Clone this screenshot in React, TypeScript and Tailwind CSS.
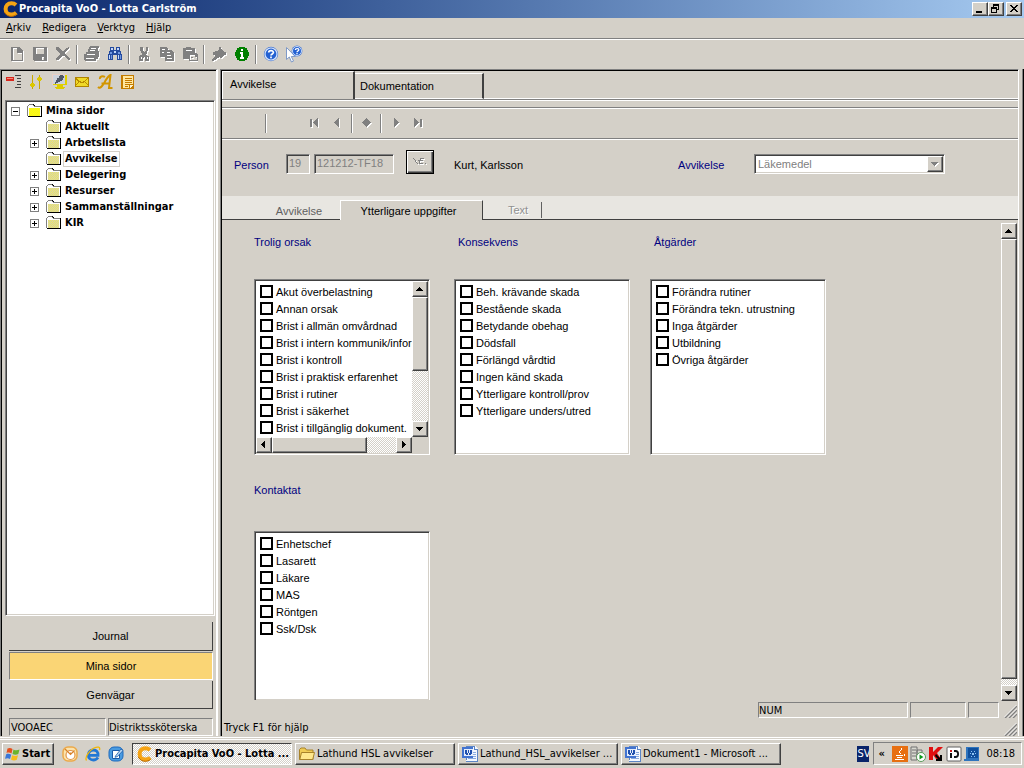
import React from "react";
import clsx from "clsx";

const raised =
  "bg-[#d4d0c8] border border-t-white border-l-white border-r-[#404040] border-b-[#404040] shadow-[inset_-1px_-1px_#808080]";
const sunken =
  "border border-t-[#808080] border-l-[#808080] border-r-white border-b-white shadow-[inset_1px_1px_#404040,inset_-1px_-1px_#d4d0c8]";
const thinSunken =
  "border border-t-[#808080] border-l-[#808080] border-r-white border-b-white";
const track =
  "bg-[repeating-conic-gradient(#ffffff_0_25%,#d4d0c8_0_50%)] bg-[length:2px_2px]";
const sans = "font-['Liberation_Sans',sans-serif]";

type IconProps = { children: React.ReactNode; size?: number };

const Icon = ({ children, size = 16 }: IconProps) => (
  <svg
    width={size}
    height={size}
    viewBox="0 0 16 16"
    shapeRendering="crispEdges"
    className="shrink-0"
    aria-hidden="true"
  >
    {children}
  </svg>
);

// Disabled glyph: grey shape with a white edge below and to the right
const Embossed = ({ d }: { d: string }) => (
  <Icon>
    <path d={d} fill="#fff" fillRule="evenodd" transform="translate(1 1)" />
    <path d={d} fill="#808080" fillRule="evenodd" />
  </Icon>
);

const Logo = () => (
  <svg width="17" height="16" viewBox="0 0 17 16" className="shrink-0" aria-hidden="true">
    <path
      d="M14 4C12.500 2.600 11 2.200 9.500 2.200C5.800 2.200 3.600 4.700 3.600 8C3.600 11.500 6.200 13.600 9.300 13.600C11.200 13.600 13 13 14.300 11.800"
      fill="none"
      stroke="#f5a314"
      strokeWidth="4"
    />
    <path
      d="M2.300 11C4 14.200 6.700 15.300 9.300 15.300C11.200 15.300 13 14.600 14.500 13.400"
      fill="none"
      stroke="#b86a05"
      strokeWidth="1"
    />
  </svg>
);

const Divider = () => (
  <span className="flex w-1.5 shrink-0 justify-center">
    <span className="h-[19px] w-0.5 border-l border-l-[#808080] bg-white" />
  </span>
);

const Groove = () => (
  <div className="shrink-0 border-t border-b border-t-[#808080] border-b-white" />
);

const ToolButton = ({ label, children }: { label: string; children: React.ReactNode }) => (
  <button
    type="button"
    aria-label={label}
    className="flex h-[22px] w-[23px] shrink-0 items-center justify-center"
  >
    {children}
  </button>
);

const arrows = {
  up: "M6 5h1v1h1v1h1v1h1v1H3V8h1V7h1V6h1z",
  down: "M3 5h7v1H9v1H8v1H7v1H6V8H5V7H4V6H3z",
  left: "M8 3v7H7V9H6V8H5V7H4V6h1V5h1V4h1V3z",
  right: "M5 3h1v1h1v1h1v1h1v1H8v1H7v1H6v1H5z",
};

const ArrowButton = ({ dir }: { dir: keyof typeof arrows }) => (
  <button
    type="button"
    aria-label={dir}
    className={clsx("flex size-4 shrink-0 items-start", raised)}
  >
    <svg width="14" height="14" viewBox="0 0 14 14" shapeRendering="crispEdges" aria-hidden="true">
      <path d={arrows[dir]} fill="#000" />
    </svg>
  </button>
);

const TitleBar = () => (
  <header className="flex h-[18px] items-center bg-linear-to-r from-[#0a246a] to-[#a6caf0] px-0.5">
    <Logo />
    <h1 className="flex-1 text-[11px] font-bold text-white">
      Procapita VoO - Lotta Carlström
    </h1>
    <button type="button" aria-label="Minimera" className={clsx("flex h-[14px] w-4", raised)}>
      <svg width="14" height="12" viewBox="0 0 14 12" shapeRendering="crispEdges">
        <path d="M3 8h6v2H3z" />
      </svg>
    </button>
    <button type="button" aria-label="Återställ" className={clsx("flex h-[14px] w-4", raised)}>
      <svg width="14" height="12" viewBox="0 0 14 12" shapeRendering="crispEdges">
        <path
          fillRule="evenodd"
          d="M4 1h6v6H8V6h1V3H5v1H4zM2 4h6v6H2zM3 6v3h4V6z"
        />
      </svg>
    </button>
    <button type="button" aria-label="Stäng" className={clsx("ml-0.5 flex h-[14px] w-4", raised)}>
      <svg width="14" height="12" viewBox="0 0 14 12" shapeRendering="crispEdges">
        <path d="M3 2h2v1h1v1h2v-1h1v-1h2v1h-1v1h-1v1h-1v1h1v1h1v1h1v1h-2v-1h-1v-1H6v1H5v1H3V8h1V7h1V6h1V5H5V4H4V3H3z" />
      </svg>
    </button>
  </header>
);

const MenuBar = () => (
  <nav className="flex h-5 items-center gap-px pl-px">
    {["Arkiv", "Redigera", "Verktyg", "Hjälp"].map((item) => (
      <button key={item} type="button" className="px-[5px]">
        <u className="underline-offset-1">{item[0]}</u>
        {item.slice(1)}
      </button>
    ))}
  </nav>
);

const HelpBall = () => (
  <>
    <circle cx="8" cy="8" r="7.200" fill="#4a78d0" />
    <circle cx="8" cy="8" r="6" fill="#2461d2" stroke="#d5e4fb" strokeWidth="1.200" />
    <path
      d="M5.700 6.500C5.700 4.200 10.500 4 10.400 6.500C10.300 8 8 8 8 9.600M8 10.600V12.300"
      fill="none"
      stroke="#fff"
      strokeWidth="1.700"
    />
  </>
);

const Toolbar = () => (
  <div className="flex h-[29px] items-center pb-px pl-[5px]">
    <ToolButton label="Ny">
      <Embossed d="M2 1h9v1h1v1h1v1h1v11H2zM4 2v12h9V7H8V2z" />
    </ToolButton>
    <ToolButton label="Spara">
      <Embossed d="M1 1h14v14H2v-1H1zM4 2v6h8V2zM10 11v3h2v-3z" />
    </ToolButton>
    <ToolButton label="Ta bort">
      <Embossed d="M1 1h3v1h1v1h1v1h1v1h2V4h1V3h1V2h2V1h1v2h-1v1h-1v1h-1v1h-1v2h1v1h1v1h1v1h1v1h1v2h-2v-1h-1v-1h-1v-1h-1v-1H7v1H6v1H5v1H4v1H1v-2h1v-1h1v-1h1v-1h1V7H4V6H3V5H2V4H1z" />
    </ToolButton>
    <Divider />
    <ToolButton label="Skriv ut">
      <Embossed d="M6 0h9v2h-1v3h1v6h-1v2h-2v2H1v-1H0V8h2V6h2V3h1V1h1zM7 2v1h5V2zM6 4v1h5V4zM3 8v1h8V8zM2 12v1h8v-1z" />
    </ToolButton>
    <ToolButton label="Sök">
      <Icon>
        <path d="M3 1h4v3h2V1h4v4h1v3h1v6h-5V9H6v5H1V8h1V5h1z" fill="#244a9e" />
        <path d="M4 2h2v2H4zM10 2h2v2h-2zM2 9h1v4H2zM11 9h1v4h-1zM7 5h2v2H7z" fill="#c5d9fa" />
        <path d="M3 6h2v2H3zM11 6h2v2h-2zM4 9h1v4H4zM13 9h1v4h-1z" fill="#6f97e2" />
      </Icon>
    </ToolButton>
    <Divider />
    <ToolButton label="Klipp ut">
      <Embossed d="M4 1h3v4h1v1h1V5h1V1h2v4h-1v3h-1v1h1v1h2v5H9v-4H8v1H7v3H3v-5h1V9h2V7H5V5H4zM5 11v2h1v-2zM11 11v2h1v-2z" />
    </ToolButton>
    <ToolButton label="Kopiera">
      <Embossed d="M1 1h7v1h1v2h4v1h1v1h1v9H6v-4H1zM3 3v1h3V3zM3 6v1h2V6zM8 6v1h3V6zM8 9v1h4V9zM8 12v1h5v-1z" />
    </ToolButton>
    <ToolButton label="Klistra in">
      <Embossed d="M1 2h3V1h5v1h4v5h2v1h1v7H7v-2H1zM4 4v1h6V4zM8 9v5h7v-3h-2V9zM9 11h2v1H9z" />
    </ToolButton>
    <Divider />
    <ToolButton label="Fäst">
      <Embossed d="M8 1h2v2h1v1h1v1h1v1h2v3h-2v1h-1v1h-1v1H9v-1H8v1H6v1H5v1H3v1H1v-2h1v-1h1v-1h1V9H2V6h2V5h3V4h1z" />
    </ToolButton>
    <ToolButton label="Information">
      <Icon>
        <path d="M5 1h6v1h2v2h1v2h1v4h-1v2h-1v2h-2v1H5v-1H3v-2H2v-2H1V6h1V4h1V2h2z" fill="#008000" />
        <path d="M7 3h2v2H7zM6 6h3v5h1v2H6v-2h1V8H6z" fill="#fff" />
      </Icon>
    </ToolButton>
    <Divider />
    <ToolButton label="Hjälp">
      <svg width="16" height="16" viewBox="0 0 16 16">
        <HelpBall />
      </svg>
    </ToolButton>
    <ToolButton label="Förklaring">
      <svg width="18" height="18" viewBox="0 0 18 18" className="shrink-0">
        <path d="M1.500 2.500v12l2.800-2.500L6.500 17l2-.9L6.300 11.500h4z" fill="#fff" stroke="#7f9ac8" />
        <g transform="translate(6 0) scale(.75)">
          <HelpBall />
        </g>
      </svg>
    </ToolButton>
  </div>
);

const SidebarTools = () => (
  <div className="flex h-[29px] shrink-0 items-start">
    <ToolButton label="Träd">
      <Icon>
        <path d="M1 3h8v4H1z" fill="#d8261c" />
        <path d="M2 4h6v1H2z" fill="#f58a7c" />
        <path d="M10 1h6v1h-6zM12 4h4v1h-4zM12 7h4v1h-4zM12 10h4v1h-4zM10 13h6v1h-6z" fill="#404040" />
      </Icon>
    </ToolButton>
    <ToolButton label="Inställningar">
      <Icon>
        <path d="M4 1h1v14H4zM11 1h1v14h-1z" fill="#c9a800" />
        <path d="M3 9h3v1h1v2H6v1H3v-1H2v-2h1zM10 3h3v1h1v2h-1v1h-3V6H9V4h1z" fill="#dcc800" />
      </Icon>
    </ToolButton>
    <ToolButton label="Skärm">
      <Icon>
        <path d="M1 0h15v11H1z" fill="#e9cfc4" />
        <path d="M14 1h2v10H2v-1h12z" fill="#e0d000" />
        <path d="M2 1h12v9H2z" fill="#ccd3dc" />
        <path d="M9 1h3v1h1v2h-1v2h-1v1H9v1H7v1H5v1H4V8h1V6h1V4h2V2h1z" fill="#505866" />
        <path d="M6 11h6v2h2v1h-1v1H5v-1H4v-1h2z" fill="#dccb00" />
      </Icon>
    </ToolButton>
    <ToolButton label="Meddelande">
      <Icon>
        <path d="M1 3h14v10H1z" fill="#b08400" />
        <path d="M2 4h12v8H2z" fill="#efd928" />
        <path d="M2 4h1v1h1v1h1v1h2v1h2V7h2V6h1V5h1V4h1v1h-1v1h-1v1h-1v1h1v1h1v1h1v1h-1v-1h-1V9h-1V8h-1v1H6V8H5v1H4v1H3v1H2v-1h1V9h1V8H4V7H3V6H2z" fill="#b88a00" />
      </Icon>
    </ToolButton>
    <ToolButton label="Text">
      <svg width="16" height="16" viewBox="0 0 16 16">
        <path
          d="M1 13C3.500 15.500 6 11 8 7.500C9.500 5 11 2 13.500 1L12 14H15.500M4.500 9.500H13M3 5C2.500 2.500 5.500 1.500 8 3"
          fill="none"
          stroke="#d29500"
          strokeWidth="2"
        />
      </svg>
    </ToolButton>
    <ToolButton label="Anteckning">
      <Icon>
        <path d="M1 1h13v14H1z" fill="#c47c00" />
        <path d="M3 2h10v8H9v4H3z" fill="#ffe7a0" />
        <path d="M2 3h1v1H2zM5 4h7v1H5zM5 6h7v1H5zM5 8h7v1H5zM5 10h4v1H5zM5 12h3v1H5z" fill="#c47a00" />
        <path d="M10 11h3v1h-1v1h-1v1h-1z" fill="#fff4cf" />
      </Icon>
    </ToolButton>
  </div>
);

const Expander = ({ open }: { open?: boolean }) => (
  <svg width="9" height="9" viewBox="0 0 9 9" shapeRendering="crispEdges" className="shrink-0">
    <path d="M0 0h9v9H0z" fill="#808080" />
    <path d="M1 1h7v7H1z" fill="#fff" />
    <path d={open ? "M2 4h5v1H2z" : "M2 4h5v1H2zM4 2h1v5H4z"} fill="#000" />
  </svg>
);

// Every second pixel of the folder front, row by row
const dither = [5, 6, 7, 8, 9, 10, 11, 12]
  .map((y) => `M${y % 2 ? 3 : 4} ${y}h1v1h-1z` + "m2 0h1v1h-1z".repeat(y % 2 ? 5 : 4))
  .join("");

const Folder = ({ bright }: { bright?: boolean }) => (
  <Icon>
    <path d="M3 1h5v1h1v1h7v11H2v-1h13V4H3z" fill="#000" />
    <path d="M3 1h4v1h1v1h7v1h-1v9H1V3h1V2h1z" fill="#808080" />
    <path d="M3 2h4v1h1v1h6v1H3v8H2V3h1z" fill="#fff" />
    <path d="M3 5h11v8H3z" fill={bright ? "#f2ee30" : "#d2d0b4"} />
    <path d={dither} fill={bright ? "#ffff00" : "#f0e860"} />
  </Icon>
);

const pages = [
  { name: "Aktuellt" },
  { name: "Arbetslista", children: true },
  { name: "Avvikelse", selected: true },
  { name: "Delegering", children: true },
  { name: "Resurser", children: true },
  { name: "Sammanställningar", children: true },
  { name: "KIR", children: true },
];

const Sidebar = () => (
  <aside className="flex w-[218px] shrink-0 flex-col border-t border-l border-r-2 border-t-[#808080] border-l-[#808080] border-r-white pt-px shadow-[inset_1px_1px_#000]">
    <SidebarTools />
    <div className={clsx("mr-px ml-1 flex-1 bg-white pt-0.5 pl-[5px]", sunken)}>
      <ul className="font-bold">
        <li>
          <div className="flex h-4 items-center">
            <Expander open />
            <span className="w-1.5" />
            <Folder bright />
            <span className="pl-1">Mina sidor</span>
          </div>
          <ul className="pl-[19px]">
            {pages.map((page) => (
              <li key={page.name} className="flex h-4 items-center">
                <span className="flex w-[15px] shrink-0">{page.children && <Expander />}</span>
                <Folder />
                <span
                  className={clsx(
                    "ml-0.5 border px-px leading-[14px]",
                    page.selected ? "border-[#d4d0c8]" : "border-transparent"
                  )}
                >
                  {page.name}
                </span>
              </li>
            ))}
          </ul>
        </li>
      </ul>
    </div>
    <div className={clsx("flex flex-col pt-1.5 pr-[3px] pl-2", sans)}>
      <button type="button" className="h-[29px] border-r border-b border-[#404040]">
        Journal
      </button>
      <button type="button" className={clsx("my-px h-[28px] bg-[#fad575]", thinSunken)}>
        Mina sidor
      </button>
      <button type="button" className="h-[28px] border-r border-b border-[#404040]">
        Genvägar
      </button>
    </div>
    <div className="mt-[9px] flex gap-0.5 pr-[3px] pl-2">
      <div className={clsx("h-[18px] w-[97px] pl-px leading-[18px]", thinSunken)}>VOOAEC</div>
      <div className={clsx("h-[18px] flex-1 leading-[18px]", thinSunken)}>
        Distriktssköterska
      </div>
    </div>
  </aside>
);

const RecordNav = () => (
  <div className="flex h-[29px] items-center pb-px pl-[41px]">
    <Divider />
    <span className="w-[34px]" />
    <ToolButton label="Första">
      <Embossed d="M3 4h2v8H3zM11 3v9h-1v-1H9v-1H8V9H7V8H6V7h1V6h1V5h1V4h1V3z" />
    </ToolButton>
    <ToolButton label="Föregående">
      <Embossed d="M9 3v9H8v-1H7v-1H6V9H5V8H4V7h1V6h1V5h1V4h1V3z" />
    </ToolButton>
    <Divider />
    <ToolButton label="Aktuell">
      <Embossed d="M7 3h1v1h1v1h1v1h1v1h1v1h-1v1h-1v1H9v1H8v1H7v-1H6v-1H5V9H4V8H3V7h1V6h1V5h1V4h1z" />
    </ToolButton>
    <Divider />
    <ToolButton label="Nästa">
      <Embossed d="M6 3v9h1v-1h1v-1h1V9h1V8h1V7h-1V6H9V5H8V4H7V3z" />
    </ToolButton>
    <ToolButton label="Sista">
      <Embossed d="M3 3v9h1v-1h1v-1h1V9h1V8h1V7H7V6H6V5H5V4H4V3zM9 4h2v8H9z" />
    </ToolButton>
  </div>
);

const PersonRow = () => (
  <div className={clsx("flex items-end pt-[10px] pr-[73px] pb-[22px] pl-3 leading-[18px]", sans)}>
    <label htmlFor="century" className="w-[52px] text-[#000080]">
      Person
    </label>
    <input
      id="century"
      disabled
      defaultValue="19"
      className={clsx("mr-1 h-5 w-6 pb-0.5 pl-0.5 text-[#808080]", sunken)}
    />
    <input
      aria-label="Personnummer"
      disabled
      defaultValue="121212-TF18"
      className={clsx("mr-3 h-5 w-20 pb-0.5 pl-0.5 text-[#808080]", sunken)}
    />
    <button
      type="button"
      aria-label="Sök person"
      className="flex h-6 w-7 items-center justify-center border border-black shadow-[inset_1px_1px_#fff,inset_-1px_-1px_#404040,inset_-2px_-2px_#808080]"
    >
      <Embossed d="M1 4h1v1h1v1h1v2h1v1h1v1H5V9H4V8H3V6H2V5H1zM8 4h4v1H9v1h2v1H8v2h3v1H7V7H6V6h2zM13 9h1v1h-1z" />
    </button>
    <span className="ml-5 flex-1">Kurt, Karlsson</span>
    <label htmlFor="deviation" className="w-[76px] text-[#000080]">
      Avvikelse
    </label>
    <div className={clsx("flex h-5 w-[191px] bg-white p-px", sunken)}>
      <select
        id="deviation"
        disabled
        className="flex-1 appearance-none bg-white pl-0.5 leading-4 text-[#808080] opacity-100"
      >
        <option>Läkemedel</option>
      </select>
      <span className={clsx("flex w-4 items-center justify-center", raised)}>
        <svg width="8" height="5" viewBox="0 0 8 5" shapeRendering="crispEdges">
          <path d="M1 1h7v1H7v1H6v1H5v1H4V4H3V3H2V2H1z" fill="#fff" />
          <path d="M0 0h7v1H6v1H5v1H4v1H3V3H2V2H1V1H0z" fill="#808080" />
        </svg>
      </span>
    </div>
  </div>
);

const SubTabs = () => (
  <div className={clsx("flex h-6 items-end bg-[#e8e6e1]", sans)} role="tablist">
    <button
      type="button"
      role="tab"
      className="h-full w-[118px] border-b border-[#404040] pt-1.5 pl-9 text-[#606060]"
    >
      Avvikelse
    </button>
    <button
      type="button"
      role="tab"
      aria-selected
      className="h-5 w-[143px] border-t border-l border-r border-t-white border-l-white border-r-[#404040] bg-[#d4d0c8] pr-1.5"
    >
      Ytterligare uppgifter
    </button>
    <button
      type="button"
      role="tab"
      className="flex h-full w-[59px] items-end border-b border-[#404040] pb-px"
    >
      <span className="h-4 flex-1 border-r border-[#606060] pl-3 text-[#909090] [text-shadow:1px_1px_#fff]">
        Text
      </span>
    </button>
    <span className="h-full flex-1 border-b border-[#404040]" />
  </div>
);

type GroupProps = {
  title: string;
  items: string[];
  indent?: boolean;
  scroll?: boolean;
  cut?: boolean;
};

const CheckList = ({ items }: { items: string[] }) => (
  <div className="flex-1 overflow-hidden pt-0.5 pl-1">
    {items.map((item) => (
      <label key={item} className="flex h-[17px] items-center gap-[3px] whitespace-nowrap">
        <input
          type="checkbox"
          className="size-[13px] shrink-0 appearance-none border-2 border-black bg-white checked:bg-[#808080]"
        />
        {item}
      </label>
    ))}
  </div>
);

const CheckGroup = ({ title, items, indent, scroll, cut }: GroupProps) => (
  <section className="w-44">
    <h2 className={clsx("h-4 leading-4 text-[#000080]", indent && "pl-1")}>{title}</h2>
    <div
      className={clsx(
        "flex flex-col bg-white px-px pt-px",
        sunken,
        cut ? "mt-[33px] h-[169px] border-b-0" : "mt-[29px] h-44 pb-px"
      )}
    >
      <div className="flex min-h-0 flex-1">
        <CheckList items={items} />
        {scroll && (
          <div className={clsx("flex w-4 shrink-0 flex-col", track)}>
            <ArrowButton dir="up" />
            <div className={clsx("h-[74px]", raised)} />
            <span className="flex-1" />
            <ArrowButton dir="down" />
          </div>
        )}
      </div>
      {scroll && (
        <div className="flex h-4 bg-[#d4d0c8]">
          <div className={clsx("flex flex-1", track)}>
            <ArrowButton dir="left" />
            <div className={clsx("w-[95px]", raised)} />
            <span className="flex-1" />
            <ArrowButton dir="right" />
          </div>
          <span className="w-4" />
        </div>
      )}
    </div>
  </section>
);

const causes = [
  "Akut överbelastning",
  "Annan orsak",
  "Brist i allmän omvårdnad",
  "Brist i intern kommunik/inform",
  "Brist i kontroll",
  "Brist i praktisk erfarenhet",
  "Brist i rutiner",
  "Brist i säkerhet",
  "Brist i tillgänglig dokument.",
];

const consequences = [
  "Beh. krävande skada",
  "Bestående skada",
  "Betydande obehag",
  "Dödsfall",
  "Förlängd vårdtid",
  "Ingen känd skada",
  "Ytterligare kontroll/prov",
  "Ytterligare unders/utred",
];

const actions = [
  "Förändra rutiner",
  "Förändra tekn. utrustning",
  "Inga åtgärder",
  "Utbildning",
  "Övriga åtgärder",
];

const contacts = ["Enhetschef", "Lasarett", "Läkare", "MAS", "Röntgen", "Ssk/Dsk"];

const Grip = () => (
  <svg width="13" height="13" viewBox="0 0 13 13" className="shrink-0">
    <path d="M1 13L13 1M5 13L13 5M9 13L13 9" stroke="#808080" strokeWidth="1.500" />
    <path d="M0 12.500L12.500 0M4 12.500L13 3.500M8 12.500L13 7.500" stroke="#fff" strokeWidth=".8" />
  </svg>
);

const Workspace = () => (
  <main className="flex min-w-0 flex-1 flex-col border-t border-l border-r border-t-[#808080] border-l-[#808080] border-r-white pt-px pl-px shadow-[inset_1px_1px_#000]">
    <div className={clsx("flex h-7 items-end text-left", sans)} role="tablist">
      <button
        type="button"
        role="tab"
        aria-selected
        className="h-7 w-[133px] border-t border-l border-r-2 border-t-white border-l-white border-r-[#404040] pb-1 pl-[7px] text-left"
      >
        Avvikelse
      </button>
      <button
        type="button"
        role="tab"
        className="h-[26px] w-[129px] border-t border-r-2 border-b border-t-white border-r-[#404040] border-b-white pl-[5px] text-left"
      >
        Dokumentation
      </button>
      <span className="h-full flex-1 border-b border-white" />
    </div>
    <Groove />
    <div className="h-1.5" />
    <Groove />
    <RecordNav />
    <Groove />
    <PersonRow />
    <SubTabs />
    <div className={clsx("flex flex-1 pr-px", sans)}>
      <div className="flex-1 pt-[14px] pl-8">
        <div className="flex">
          <CheckGroup title="Trolig orsak" items={causes} scroll />
          <span className="w-6" />
          <CheckGroup title="Konsekvens" items={consequences} indent />
          <span className="w-5" />
          <CheckGroup title="Åtgärder" items={actions} indent />
        </div>
        <div className="mt-[27px]">
          <CheckGroup title="Kontaktat" items={contacts} cut />
        </div>
      </div>
      <div className={clsx("mt-[3px] flex w-4 flex-col", track)}>
        <ArrowButton dir="up" />
        <div className={clsx("flex-1", raised)} />
        <span className="h-1.5" />
        <ArrowButton dir="down" />
      </div>
    </div>
    <div className="mt-px flex justify-end gap-0.5 pr-px">
      <div className={clsx("h-4 w-[150px] leading-4", thinSunken)}>NUM</div>
      <div className={clsx("h-4 w-14", thinSunken)} />
      <div className={clsx("h-4 w-[31px]", thinSunken)} />
      <span className="flex w-4 items-end justify-end">
        <Grip />
      </span>
    </div>
    <div className="flex h-[18px] items-end justify-between pr-px pl-0.5">
      <span className="leading-4">Tryck F1 för hjälp</span>
      <Grip />
    </div>
  </main>
);

const WordIcon = () => (
  <Icon>
    <path d="M4 0h9l3 3v12H4z" fill="#f4f8ff" />
    <path d="M4 0h9v1H5v13H4zM15 3h1v13H4v-1h11zM12 0h1v3h3v1h-4z" fill="#5b84c4" />
    <path d="M11 6h3v1h-3zM11 8h3v1h-3zM11 10h3v1h-3zM6 12h8v1H6z" fill="#8aaade" />
    <path d="M0 1h11v11H0z" fill="#4273d0" />
    <path d="M2 3h9v7H2z" fill="#e4edfc" />
    <path d="M3 4h2v3h1V4h1v3h1V4h2v4H9v1H7V7H6v2H4V8H3z" fill="#1f4fae" />
  </Icon>
);

const YellowFolder = () => (
  <svg width="16" height="16" viewBox="0 0 16 16" className="shrink-0">
    <path d="M.5 3.500L2 2h4l1.500 2H14v9.500H.5z" fill="#f0cc55" stroke="#a8832a" />
    <path d="M2.500 6.500h13l-1.800 7H.8z" fill="#ffe88c" stroke="#a8832a" />
  </svg>
);

const windows = [
  { title: "Procapita VoO - Lotta ...", icon: <Logo />, active: true },
  { title: "Lathund HSL avvikelser", icon: <YellowFolder /> },
  { title: "Lathund_HSL_avvikelser ...", icon: <WordIcon /> },
  { title: "Dokument1 - Microsoft ...", icon: <WordIcon /> },
];

const QuickLaunch = () => (
  <div className="flex gap-[7px] pr-2 pl-2">
    <button type="button" aria-label="Outlook">
      <svg width="16" height="16" viewBox="0 0 16 16">
        <rect x="1" y="1" width="14" height="14" rx="5" fill="#fbe3ad" stroke="#eba94a" strokeWidth="1.500" />
        <circle cx="8.500" cy="9" r="4.500" fill="#fff" stroke="#e0954a" strokeWidth="1.200" />
        <path d="M3 3l5.500 5.500 4-4M8.500 8.500v-2" fill="none" stroke="#d9822a" strokeWidth="1.200" />
      </svg>
    </button>
    <button type="button" aria-label="Internet Explorer">
      <svg width="16" height="16" viewBox="0 0 16 16">
        <path d="M13 11.500C11.800 13.300 10.200 14 8.300 14C5.300 14 3.300 12 3.300 9C3.300 6 5.500 4 8.300 4C11.500 4 13.200 6 13 9.300H4" fill="none" stroke="#2277d4" strokeWidth="2.800" />
        <path d="M1.500 14.500C-.5 11.500 4 4.500 9 2C13 .2 15.500 1 14.500 4" fill="none" stroke="#f2b705" strokeWidth="1.300" />
      </svg>
    </button>
    <button type="button" aria-label="Visa skrivbordet">
      <svg width="16" height="16" viewBox="0 0 16 16">
        <rect x="1" y="1" width="14" height="14" rx="5" fill="#4a9be0" stroke="#1d6abf" />
        <path d="M4.500 4.500h7v8h-7z" fill="#fff" stroke="#1a5aa8" />
        <path d="M7.500 10l5.500-7 2 1.500-5.500 6-2.500.8z" fill="#b8d8f5" stroke="#1a5aa8" strokeWidth=".8" />
      </svg>
    </button>
  </div>
);

const Tray = () => (
  <div className={clsx("flex h-[23px] items-center gap-0.5 pr-1.5 pl-1", thinSunken)}>
    <button type="button" aria-label="Visa dolda ikoner" className="w-3 text-left font-bold">
      «
    </button>
    <Icon>
      <path d="M0 0h16v16H0z" fill="#e76f11" />
      <path d="M9 2h1v2H9v1H8v2h1v1H8V7H7V5h1V4h1zM4 9h7v1H4zM5 11h5v1H5zM3 13h9v1H3zM12 8h1v2h-1z" fill="#fff" />
    </Icon>
    <svg width="16" height="16" viewBox="0 0 16 16">
      <path d="M1 1h6v13H1zM7 4h5v9H7z" fill="#d8d8d0" stroke="#707070" />
      <path d="M2 4h4M2 7h4M2 10h4" stroke="#707070" />
      <circle cx="11" cy="11" r="4.500" fill="#fff" stroke="#5a9a5a" />
      <path d="M9.500 8.500v5l4-2.500z" fill="#0a9a1a" />
    </svg>
    <svg width="16" height="16" viewBox="0 0 16 16">
      <path d="M1 1h4v5l5-5h5L9 7l4 6H8L5 9v5H1z" fill="#e00f0f" />
      <path d="M8 8l4 4V9h2v6H8v-2h2L7 10z" fill="#000" />
    </svg>
    <svg width="16" height="16" viewBox="0 0 16 16">
      <rect x="1" y="1" width="14" height="14" rx="1" fill="#fff" stroke="#606060" />
      <path d="M4 4h2v2H4z" fill="#d01818" />
      <path d="M4 7h2v5H4z" fill="#101010" />
      <path d="M8 5h1.500c3.500 0 3.500 6 0 6H8" fill="none" stroke="#101010" strokeWidth="1.800" />
    </svg>
    <Icon>
      <path d="M2 1h13v14H0v-2h2z" fill="#2f74bd" />
      <path d="M4 2h10v10H4z" fill="#0f4f9c" />
      <path d="M7 5h1v1H7zM10 5h1v1h-1zM6 7h1v1H6zM8 7h2v2H8zM11 7h1v1h-1zM7 10h1v1H7zM10 10h1v1h-1z" fill="#8fc4f2" />
    </Icon>
    <time className="ml-1">08:18</time>
  </div>
);

const Taskbar = () => (
  <footer className="flex h-[29px] items-center border-t border-white px-0.5 pb-px">
    <button
      type="button"
      className={clsx("flex h-[22px] w-[52px] items-center gap-px pl-0.5 font-bold", raised)}
    >
      <svg width="16" height="16" viewBox="0 0 16 16" className="shrink-0">
        <path d="M2.500 2.500C4.500 1.500 6 2 7.500 3L6.500 7.500C5 6.500 3.500 6.300 1.500 7z" fill="#e5501e" />
        <path d="M8.500 3.500C10.500 4.700 12.500 4.500 14.500 3.500L13.300 8C11.500 9 9.500 9 7.500 8z" fill="#6ab42d" />
        <path d="M1.200 8.200C3 7.500 4.700 7.700 6.200 8.700L5 13C3.500 12 2 12 0 12.700z" fill="#3a77d8" />
        <path d="M7.200 9.200C9.200 10.300 11 10.200 13 9.300L11.800 13.700C10 14.700 8 14.700 6 13.500z" fill="#f7bd1c" />
      </svg>
      Start
    </button>
    <QuickLaunch />
    <div className="flex min-w-0 flex-1 gap-[3px]">
      {windows.map((win) => (
        <button
          key={win.title}
          type="button"
          className={clsx(
            "flex h-[22px] w-40 items-center gap-0.5 pl-[3px] whitespace-nowrap",
            win.active
              ? "border border-t-[#404040] border-l-[#404040] border-r-white border-b-white bg-[repeating-conic-gradient(#ffffff_0_25%,#d4d0c8_0_50%)] bg-[length:2px_2px] font-bold"
              : raised
          )}
        >
          {win.icon}
          <span>{win.title}</span>
        </button>
      ))}
    </div>
    <span className="mr-1 h-4 w-3 overflow-hidden bg-[#0a246a] leading-4 text-white">SV</span>
    <Tray />
  </footer>
);

const App = () => {
  return (
    <div className="flex min-h-screen flex-col bg-[#d4d0c8] font-['DejaVu_Sans_Condensed','DejaVu_Sans',sans-serif] text-[11px] leading-4 text-black">
      <TitleBar />
      <MenuBar />
      <Groove />
      <Toolbar />
      <div className="flex flex-1 gap-0.5">
        <Sidebar />
        <Workspace />
        <div className="ml-px w-0.5 border-l border-l-[#808080] bg-black" />
      </div>
      <div className="mt-px mb-px border-t border-white" />
      <Taskbar />
    </div>
  );
};

export default App;
